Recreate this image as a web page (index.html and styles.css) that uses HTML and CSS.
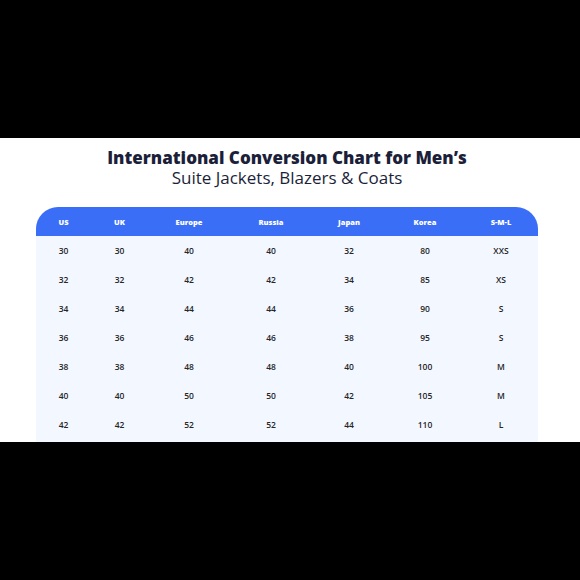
FILE: index.html
```html
<!DOCTYPE html>
<html lang="en">
<head>
<meta charset="utf-8">
<title>International Conversion Chart for Men’s Suite Jackets</title>
<link rel="stylesheet" href="styles.css">
</head>
<body>
<div class="frame">
  <div class="bar"></div>
  <section class="panel">
    <h1 class="title">International Conversion Chart for Men’s</h1>
    <p class="subtitle">Suite Jackets, Blazers &amp; Coats</p>
    <table class="chart">
      <colgroup>
        <col class="c-us"><col class="c-uk"><col class="c-eu"><col class="c-ru"><col class="c-jp"><col class="c-kr"><col class="c-sml">
      </colgroup>
      <thead>
        <tr><th>US</th><th>UK</th><th>Europe</th><th>Russia</th><th>Japan</th><th>Korea</th><th>S-M-L</th></tr>
      </thead>
      <tbody>
        <tr><td>30</td><td>30</td><td>40</td><td>40</td><td>32</td><td>80</td><td>XXS</td></tr>
        <tr><td>32</td><td>32</td><td>42</td><td>42</td><td>34</td><td>85</td><td>XS</td></tr>
        <tr><td>34</td><td>34</td><td>44</td><td>44</td><td>36</td><td>90</td><td>S</td></tr>
        <tr><td>36</td><td>36</td><td>46</td><td>46</td><td>38</td><td>95</td><td>S</td></tr>
        <tr><td>38</td><td>38</td><td>48</td><td>48</td><td>40</td><td>100</td><td>M</td></tr>
        <tr><td>40</td><td>40</td><td>50</td><td>50</td><td>42</td><td>105</td><td>M</td></tr>
        <tr><td>42</td><td>42</td><td>52</td><td>52</td><td>44</td><td>110</td><td>L</td></tr>
      </tbody>
    </table>
  </section>
  <div class="bar"></div>
</div>
</body>
</html>
```

FILE: styles.css
```css
html, body {
  margin: 0;
  padding: 0;
  background: #000;
}

.frame {
  width: 580px;
  height: 580px;
  display: flex;
  flex-direction: column;
  background: #000;
}

.bar {
  height: 138px;
  flex: none;
  background: #000;
}

.panel {
  height: 304px;
  flex: none;
  overflow: hidden;
  background: #fff;
  padding: 10px 42px 0 36px;
  box-sizing: border-box;
  font-family: "Open Sans", "Noto Sans", sans-serif;
}

.title {
  margin: 0;
  font-size: 17px;
  line-height: 20px;
  font-weight: 800;
  color: #1c1f3a;
  text-align: center;
}

.subtitle {
  margin: 0;
  font-size: 17px;
  line-height: 20px;
  font-weight: 400;
  color: #1c1f3a;
  text-align: center;
}

.chart {
  margin-top: 19px;
  width: 502px;
  border-collapse: separate;
  border-spacing: 0;
  table-layout: fixed;
}

.c-us { width: 55px; }
.c-uk { width: 57px; }
.c-eu { width: 82px; }
.c-ru { width: 82px; }
.c-jp { width: 74px; }
.c-kr { width: 78px; }
.c-sml { width: 74px; }

.chart th {
  height: 29px;
  padding: 0;
  background: #3b6ef6;
  color: #fff;
  font-size: 7.5px;
  font-weight: 800;
  text-align: center;
  vertical-align: middle;
}

.chart th:first-child { border-top-left-radius: 22px; }
.chart th:last-child { border-top-right-radius: 22px; }

.chart td {
  padding: 0;
  line-height: 29px;
  background: #f3f7ff;
  color: #262626;
  font-size: 8.5px;
  font-weight: 600;
  text-align: center;
  vertical-align: top;
}

.chart tr:last-child td {
  padding-bottom: 6px;
}
```
